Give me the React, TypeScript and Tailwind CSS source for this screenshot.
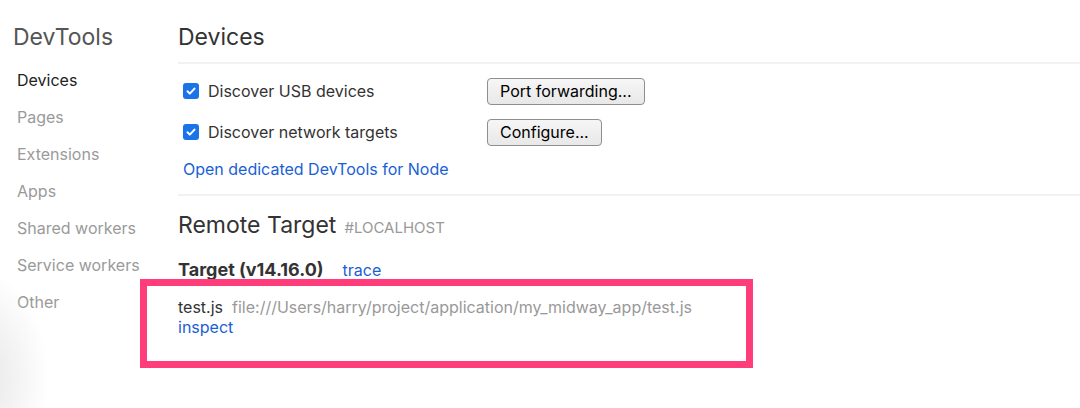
import React from 'react';

const font = { fontFamily: 'Inter, "Liberation Sans", sans-serif' };

const navItems = ['Devices', 'Pages', 'Extensions', 'Apps', 'Shared workers', 'Service workers', 'Other'];

const Check: React.FC = () => (
  <span className="flex h-[16px] w-[16px] items-center justify-center rounded-[3px] bg-[#1a73e8]">
    <svg width="12" height="12" viewBox="0 0 12 12" fill="none">
      <path d="M2.5 6.3l2.3 2.3 4.7-5" stroke="white" strokeWidth="2" strokeLinecap="round" strokeLinejoin="round" />
    </svg>
  </span>
);

const Button: React.FC<{ label: string }> = ({ label }) => (
  <button className="h-[27px] rounded-[4px] border border-[#8e8e8e] bg-gradient-to-b from-[#f6f6f6] to-[#e8e8e8] px-[12px] text-[16px] leading-none text-black">
    {label}
  </button>
);

const App: React.FC = () => {
  return (
    <div className="relative flex h-[408px] w-[1080px] overflow-hidden bg-white" style={font}>
      {/* sidebar */}
      <div className="w-[178px] shrink-0 pt-[23px]">
        <h1 className="pl-[13px] text-[23px] leading-[28px] text-[#555]">DevTools</h1>
        <ul className="mt-[19px] pl-[17px]">
          {navItems.map((item, i) => (
            <li
              key={item}
              className={`h-[37px] text-[16px] leading-[20px] ${i === 0 ? 'text-[#222]' : 'text-[#9a9a9a]'}`}
            >
              {item}
            </li>
          ))}
        </ul>
      </div>

      {/* main */}
      <div className="flex-1 pt-[23px]">
        <h2 className="text-[23px] leading-[28px] text-[#333]">Devices</h2>
        <div className="mt-[11px] h-[2px] bg-[#f2f2f2]" />

        <div className="pl-[5px] pt-[13px]">
          <div className="flex h-[28px] items-center">
            <Check />
            <span className="ml-[9px] w-[279px] text-[16px] text-[#333]">Discover USB devices</span>
            <Button label="Port forwarding..." />
          </div>
          <div className="mt-[13px] flex h-[28px] items-center">
            <Check />
            <span className="ml-[9px] w-[279px] text-[16px] text-[#333]">Discover network targets</span>
            <Button label="Configure..." />
          </div>
          <div className="mt-[11px] text-[16px] leading-[24px] text-[#1a5fd4]">Open dedicated DevTools for Node</div>
        </div>

        <div className="mt-[13px] h-[2px] bg-[#f2f2f2]" />

        <div className="mt-[15px] flex items-baseline">
          <h2 className="text-[23px] leading-[28px] text-[#333]">Remote Target</h2>
          <span className="ml-[8px] text-[15px] text-[#999]">#LOCALHOST</span>
        </div>

        <div className="mt-[18px] flex items-baseline">
          <span className="text-[18px] font-bold leading-[22px] text-[#333]">Target (v14.16.0)</span>
          <span className="ml-[19px] text-[16px] text-[#1a5fd4]">trace</span>
        </div>

        <div className="mt-[15px]">
          <div className="flex items-baseline leading-[20px]">
            <span className="text-[16px] text-[#333]">test.js</span>
            <span className="ml-[9px] text-[16px] text-[#999]">file:///Users/harry/project/application/my_midway_app/test.js</span>
          </div>
          <div className="text-[16px] leading-[20px] text-[#1a5fd4]">inspect</div>
        </div>
      </div>

      {/* annotation highlight */}
      <div className="absolute left-[140px] top-[279px] h-[89px] w-[613px] border-[7px] border-[#ff3d7a]" />
      {/* window corner shade */}
      <div className="pointer-events-none absolute bottom-[-80px] left-[-20px] h-[220px] w-[70px] bg-[radial-gradient(ellipse_at_left,#e6e6e6_0%,transparent_70%)]" />
    </div>
  );
};

export default App;
